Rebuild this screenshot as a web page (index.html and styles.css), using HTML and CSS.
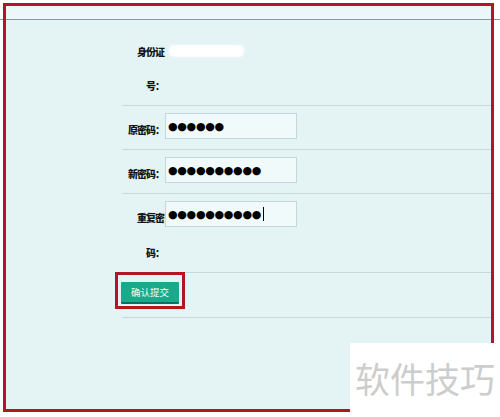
FILE: index.html
```html
<!DOCTYPE html>
<html lang="zh-CN">
<head>
<meta charset="utf-8">
<title>修改密码</title>
<link rel="stylesheet" href="styles.css">
</head>
<body>
<div class="frame">
  <div class="topbar"></div>
  <div class="form">
    <div class="row row-id">
      <div class="label">身份证号：</div>
      <div class="value"><span class="blur"></span></div>
    </div>
    <div class="row">
      <div class="label">原密码：</div>
      <div class="field"><span class="dots">●●●●●●</span></div>
    </div>
    <div class="row">
      <div class="label">新密码：</div>
      <div class="field"><span class="dots">●●●●●●●●●●</span></div>
    </div>
    <div class="row">
      <div class="label">重复密码：</div>
      <div class="field"><span class="dots">●●●●●●●●●●</span><span class="caret"></span></div>
    </div>
    <div class="row row-btn">
      <div class="mark"><button class="submit" type="button">确认提交</button></div>
    </div>
    <div class="row row-end"></div>
  </div>
</div>
<div class="watermark">软件技巧</div>
</body>
</html>
```

FILE: styles.css
```css
html, body {
  margin: 0;
  padding: 0;
}
body {
  width: 500px;
  height: 417px;
  overflow: hidden;
  position: relative;
  background: linear-gradient(to bottom, #ffffff 19px, #7e9ca3 19px, #7e9ca3 20px, #ffffff 20px);
  font-family: "Noto Sans CJK SC", "Noto Sans", sans-serif;
}
.frame {
  box-sizing: border-box;
  margin: 3px 6px 0 3px;
  height: 409px;
  border: 3px solid #b3161e;
  background: #e4f3f4;
}
.topbar {
  height: 13px;
  background: #ebf7f8;
  border-bottom: 1px solid #7e9ca3;
}
.form {
  margin-left: 116px;
  padding-top: 15px;
  display: flex;
  flex-direction: column;
}
.row {
  display: flex;
  align-items: flex-start;
  border-top: 1px solid #c7d9dc;
  padding: 6px 0 2px;
}
.row-id {
  border-top: none;
  padding: 0 0 2px;
}
.label {
  width: 42px;
  text-align: right;
  font-size: 10px;
  font-weight: 900;
  letter-spacing: -1px;
  line-height: 35px;
  color: #141414;
}
.row-id .label {
  line-height: 34px;
}
.value {
  margin-left: 6px;
  padding-top: 11px;
}
.blur {
  display: block;
  width: 73px;
  height: 10px;
  border-radius: 4px;
  background: #ffffff;
  box-shadow: 0 0 3px 1px #ffffff;
}
.field {
  box-sizing: border-box;
  margin-top: 1px;
  margin-left: 1px;
  width: 132px;
  height: 26px;
  background: #f0fafb;
  border: 1px solid #c4d7db;
  padding-left: 2px;
  display: flex;
  align-items: center;
}
.dots {
  font-family: "DejaVu Sans", sans-serif;
  font-size: 11px;
  letter-spacing: -0.3px;
  color: #000;
  line-height: 1;
}
.caret {
  display: inline-block;
  width: 1px;
  height: 14px;
  background: #000;
  margin-left: 2px;
}
.row-btn {
  padding: 0 0 8px;
}
.mark {
  margin-top: -1px;
  margin-left: -7px;
  border: 3px solid #b3161e;
  padding: 7px 3px 2px;
  width: 58px;
}
.submit {
  display: block;
  width: 58px;
  height: 22px;
  border: none;
  border-bottom: 2px solid #0f6f5c;
  border-radius: 1px;
  background: #1aa98a;
  color: #f4fffb;
  font-family: "Noto Sans CJK SC", sans-serif;
  font-size: 9.5px;
  padding: 0;
  margin: 0;
}
.row-end {
  padding: 0;
}
.watermark {
  position: absolute;
  left: 350px;
  top: 343px;
  width: 145px;
  height: 74px;
  padding-left: 5px;
  background: #ffffff;
  color: #cdcdcd;
  font-family: "Noto Sans CJK SC", sans-serif;
  font-size: 35px;
  line-height: 70px;
  white-space: nowrap;
}
```
